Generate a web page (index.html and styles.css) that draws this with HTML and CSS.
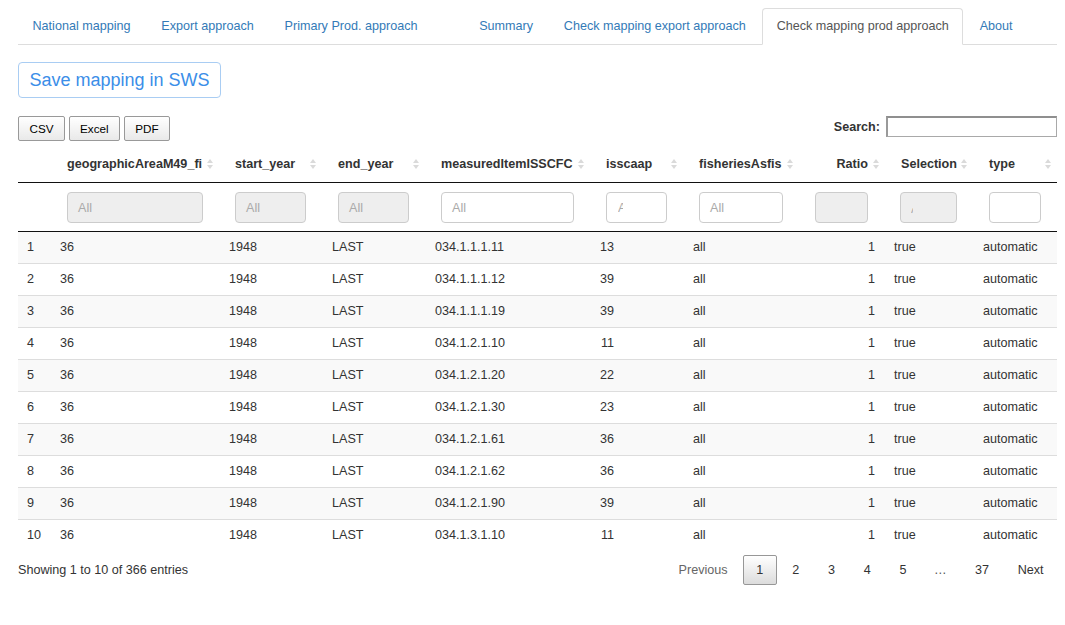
FILE: index.html
```html
<!DOCTYPE html>
<html lang="en">
<head>
<meta charset="utf-8">
<title>Check mapping prod approach</title>
<link rel="stylesheet" href="styles.css">
</head>
<body>
<div class="page">
  <ul class="tabs">
    <li><a href="#">National mapping</a></li>
    <li><a href="#">Export approach</a></li>
    <li><a href="#">Primary Prod. approach</a></li>
    <li><a href="#" class="empty"></a></li>
    <li><a href="#">Summary</a></li>
    <li><a href="#">Check mapping export approach</a></li>
    <li><a href="#" class="active">Check mapping prod approach</a></li>
    <li><a href="#">About</a></li>
  </ul>

  <div class="save-row">
    <button class="save-btn">Save mapping in SWS</button>
  </div>

  <div class="dt">
    <div class="toolbar">
      <div class="dt-buttons">
        <button class="dt-btn">CSV</button>
        <button class="dt-btn">Excel</button>
        <button class="dt-btn">PDF</button>
      </div>
      <label class="search">Search: <input type="text" class="search-input"></label>
    </div>

    <table class="head-table">
      <colgroup>
        <col class="hc-idx"><col class="hc-geo"><col class="hc-start"><col class="hc-end"><col class="hc-meas"><col class="hc-iss"><col class="hc-fish"><col class="hc-ratio"><col class="hc-sel"><col class="hc-type">
      </colgroup>
      <thead>
        <tr class="labels">
          <th></th>
          <th><div class="th-in"><span>geographicAreaM49_fi</span><svg class="sort" viewBox="0 0 6 12"><path d="M0 5 L3 1 L6 5 Z M0 7 L3 11 L6 7 Z"/></svg></div></th>
          <th><div class="th-in"><span>start_year</span><svg class="sort" viewBox="0 0 6 12"><path d="M0 5 L3 1 L6 5 Z M0 7 L3 11 L6 7 Z"/></svg></div></th>
          <th><div class="th-in"><span>end_year</span><svg class="sort" viewBox="0 0 6 12"><path d="M0 5 L3 1 L6 5 Z M0 7 L3 11 L6 7 Z"/></svg></div></th>
          <th><div class="th-in"><span>measuredItemISSCFC</span><svg class="sort" viewBox="0 0 6 12"><path d="M0 5 L3 1 L6 5 Z M0 7 L3 11 L6 7 Z"/></svg></div></th>
          <th><div class="th-in"><span>isscaap</span><svg class="sort" viewBox="0 0 6 12"><path d="M0 5 L3 1 L6 5 Z M0 7 L3 11 L6 7 Z"/></svg></div></th>
          <th><div class="th-in"><span>fisheriesAsfis</span><svg class="sort" viewBox="0 0 6 12"><path d="M0 5 L3 1 L6 5 Z M0 7 L3 11 L6 7 Z"/></svg></div></th>
          <th><div class="th-in th-right"><span>Ratio</span><svg class="sort" viewBox="0 0 6 12"><path d="M0 5 L3 1 L6 5 Z M0 7 L3 11 L6 7 Z"/></svg></div></th>
          <th><div class="th-in"><span>Selection</span><svg class="sort" viewBox="0 0 6 12"><path d="M0 5 L3 1 L6 5 Z M0 7 L3 11 L6 7 Z"/></svg></div></th>
          <th class="th-last"><div class="th-in"><span>type</span><svg class="sort" viewBox="0 0 6 12"><path d="M0 5 L3 1 L6 5 Z M0 7 L3 11 L6 7 Z"/></svg></div></th>
        </tr>
        <tr class="filters">
          <td></td>
          <td><div class="filter disabled f-geo"><span class="ph">All</span></div></td>
          <td><div class="filter disabled f-start"><span class="ph">All</span></div></td>
          <td><div class="filter disabled f-end"><span class="ph">All</span></div></td>
          <td><div class="filter f-meas"><span class="ph">All</span></div></td>
          <td><div class="filter f-iss"><span class="ph clip-a">All</span></div></td>
          <td><div class="filter f-fish"><span class="ph">All</span></div></td>
          <td><div class="filter disabled f-ratio"></div></td>
          <td class="td-sel"><div class="filter disabled f-sel"><span class="ph clip-tiny">All</span></div></td>
          <td><div class="filter f-type"></div></td>
        </tr>
      </thead>
    </table>

    <table class="body-table">
      <colgroup>
        <col class="bc-idx"><col class="bc-geo"><col class="bc-start"><col class="bc-end"><col class="bc-meas"><col class="bc-iss"><col class="bc-fish"><col class="bc-ratio"><col class="bc-sel"><col class="bc-type">
      </colgroup>
      <tbody>
        <tr><td>1</td><td>36</td><td>1948</td><td>LAST</td><td>034.1.1.1.11</td><td class="num-iss">13</td><td>all</td><td class="num">1</td><td>true</td><td>automatic</td></tr>
        <tr><td>2</td><td>36</td><td>1948</td><td>LAST</td><td>034.1.1.1.12</td><td class="num-iss">39</td><td>all</td><td class="num">1</td><td>true</td><td>automatic</td></tr>
        <tr><td>3</td><td>36</td><td>1948</td><td>LAST</td><td>034.1.1.1.19</td><td class="num-iss">39</td><td>all</td><td class="num">1</td><td>true</td><td>automatic</td></tr>
        <tr><td>4</td><td>36</td><td>1948</td><td>LAST</td><td>034.1.2.1.10</td><td class="num-iss">11</td><td>all</td><td class="num">1</td><td>true</td><td>automatic</td></tr>
        <tr><td>5</td><td>36</td><td>1948</td><td>LAST</td><td>034.1.2.1.20</td><td class="num-iss">22</td><td>all</td><td class="num">1</td><td>true</td><td>automatic</td></tr>
        <tr><td>6</td><td>36</td><td>1948</td><td>LAST</td><td>034.1.2.1.30</td><td class="num-iss">23</td><td>all</td><td class="num">1</td><td>true</td><td>automatic</td></tr>
        <tr><td>7</td><td>36</td><td>1948</td><td>LAST</td><td>034.1.2.1.61</td><td class="num-iss">36</td><td>all</td><td class="num">1</td><td>true</td><td>automatic</td></tr>
        <tr><td>8</td><td>36</td><td>1948</td><td>LAST</td><td>034.1.2.1.62</td><td class="num-iss">36</td><td>all</td><td class="num">1</td><td>true</td><td>automatic</td></tr>
        <tr><td>9</td><td>36</td><td>1948</td><td>LAST</td><td>034.1.2.1.90</td><td class="num-iss">39</td><td>all</td><td class="num">1</td><td>true</td><td>automatic</td></tr>
        <tr><td>10</td><td>36</td><td>1948</td><td>LAST</td><td>034.1.3.1.10</td><td class="num-iss">11</td><td>all</td><td class="num">1</td><td>true</td><td>automatic</td></tr>
      </tbody>
    </table>

    <div class="footer">
      <div class="info">Showing 1 to 10 of 366 entries</div>
      <div class="pager">
        <a class="pg disabled">Previous</a>
        <a class="pg current">1</a>
        <a class="pg">2</a>
        <a class="pg">3</a>
        <a class="pg">4</a>
        <a class="pg">5</a>
        <span class="ellipsis">…</span>
        <a class="pg">37</a>
        <a class="pg">Next</a>
      </div>
    </div>
  </div>
</div>
</body>
</html>
```

FILE: styles.css
```css
* { box-sizing: border-box; }

html, body {
  margin: 0;
  padding: 0;
  background: #fff;
}

body {
  font-family: "Liberation Sans", Arial, Helvetica, sans-serif;
  font-size: 12.6px;
  color: #333;
}

.page {
  padding: 8px 8px 0 18px;
}

/* Tabs */
.tabs {
  list-style: none;
  margin: 0;
  padding: 0;
  display: flex;
  border-bottom: 1px solid #ddd;
}

.tabs li {
  margin-bottom: -1px;
}

.tabs a {
  display: block;
  margin-right: 1.8px;
  padding: 9px 13.5px;
  line-height: 17px;
  border: 1px solid transparent;
  border-radius: 4px 4px 0 0;
  color: #337ab7;
  text-decoration: none;
  white-space: nowrap;
}

.tabs a.empty {
  width: 29px;
  height: 37px;
}

.tabs a.active {
  color: #555;
  background: #fff;
  border-color: #ddd #ddd transparent #ddd;
}

/* Save */
.save-row {
  margin-top: 17px;
}

.save-btn {
  font-family: "Liberation Sans", Arial, sans-serif;
  font-size: 18px;
  line-height: 20px;
  padding: 7px 10.5px;
  color: #3b8ee8;
  background: #fff;
  border: 1px solid #a9cdf3;
  border-radius: 4px;
  cursor: pointer;
}

/* DataTable */
.dt {
  margin-top: 18px;
  width: 1039px;
}

.toolbar {
  display: flex;
  justify-content: space-between;
  align-items: flex-start;
  height: 25px;
}

.dt-buttons {
  display: flex;
}

.dt-btn {
  height: 25px;
  padding: 0 10.5px;
  margin-right: 3.5px;
  font-family: "Liberation Sans", Arial, sans-serif;
  font-size: 11.7px;
  color: #000;
  border: 1px solid #999;
  border-radius: 2px;
  background: linear-gradient(to bottom, #ffffff 0%, #e9e9e9 100%);
  cursor: pointer;
}

.search {
  display: flex;
  align-items: center;
  font-weight: bold;
  font-size: 12.6px;
  color: #333;
}

.search-input {
  width: 171px;
  height: 21px;
  margin-left: 6px;
  border: 1px solid #a9a9a9;
  border-top: 2px solid #8f8f8f;
  border-left: 2px solid #9a9a9a;
  background: #fff;
}

table {
  border-collapse: collapse;
  table-layout: fixed;
  width: 1039px;
}

.head-table {
  margin-top: 5px;
}

.hc-idx { width: 39px; }
.hc-geo { width: 168px; }
.hc-start { width: 103px; }
.hc-end { width: 103px; }
.hc-meas { width: 165px; }
.hc-iss { width: 93px; }
.hc-fish { width: 116px; }
.hc-ratio { width: 86px; }
.hc-sel { width: 88px; }
.hc-type { width: 78px; }

.labels th {
  padding: 9px 12px 9px 10px;
  line-height: 18px;
  font-weight: bold;
  text-align: left;
  white-space: nowrap;
  border-bottom: 1px solid #111;
}

.labels th.th-last {
  padding-right: 6px;
}

.th-in {
  display: flex;
  justify-content: space-between;
  align-items: center;
}

.th-in.th-right {
  justify-content: flex-end;
  gap: 5px;
}

.sort {
  width: 6px;
  height: 12px;
  fill: #dadada;
  flex: none;
}

.filters td {
  padding: 9px 0 8px 10px;
  border-bottom: 1px solid #111;
}

.filters td.td-sel {
  padding-left: 9px;
}

.filter {
  height: 31px;
  border: 1px solid #ccc;
  border-radius: 4px;
  background: #fff;
  padding: 0 10px;
  display: flex;
  align-items: center;
  overflow: hidden;
}

.filter.disabled {
  background: #eee;
}

.ph {
  color: #aaa;
  white-space: nowrap;
}

.clip-a {
  display: inline-block;
  width: 5px;
  overflow: hidden;
  margin-left: 1px;
}

.clip-tiny {
  display: inline-block;
  width: 2px;
  overflow: hidden;
  height: 5px;
  line-height: 2px;
  margin-top: 6px;
}

.f-geo { width: 136px; }
.f-start { width: 71px; }
.f-end { width: 71px; }
.f-meas { width: 133px; }
.f-iss { width: 61px; }
.f-fish { width: 84px; }
.f-ratio { width: 53px; }
.f-sel { width: 57px; }
.f-type { width: 52px; }

.bc-idx { width: 33px; }
.bc-geo { width: 169px; }
.bc-start { width: 103px; }
.bc-end { width: 103px; }
.bc-meas { width: 164px; }
.bc-iss { width: 94px; }
.bc-fish { width: 106px; }
.bc-ratio { width: 95px; }
.bc-sel { width: 89px; }
.bc-type { width: 83px; }

.body-table td {
  padding: 7px 9px;
  line-height: 17px;
  border-top: 1px solid #ddd;
  white-space: nowrap;
}

.body-table tr:first-child td {
  border-top: none;
}

.body-table tr:nth-child(odd) {
  background: #f9f9f9;
}

.body-table td.num {
  text-align: right;
  padding-right: 10px;
}

.body-table td.num-iss {
  text-align: right;
  padding-right: 70px;
}

/* Footer */
.footer {
  display: flex;
  justify-content: space-between;
  align-items: center;
  margin-top: 4px;
}

.info {
  color: #333;
}

.pager {
  display: flex;
  align-items: center;
}

.pg {
  display: inline-block;
  padding: 6px 12.4px;
  margin-left: 2px;
  line-height: 16px;
  text-align: center;
  border: 1px solid transparent;
  border-radius: 2px;
  color: #333;
  cursor: pointer;
}

.pg.disabled {
  color: #666;
  cursor: default;
}

.pg.current {
  border: 1px solid #979797;
  background: linear-gradient(to bottom, #ffffff 0%, #dcdcdc 100%);
}

.ellipsis {
  padding: 0 13px 0 14px;
  color: #555;
}
```
